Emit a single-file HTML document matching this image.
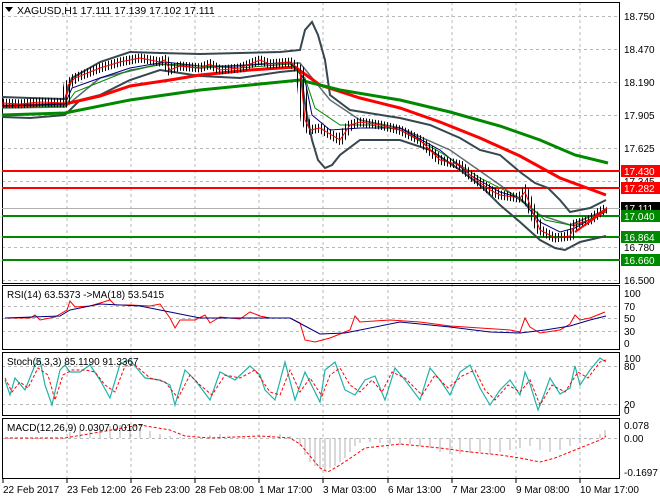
<!DOCTYPE html>
<html><head><meta charset="utf-8"><style>
body{margin:0;background:#fff;}
svg{display:block;font-family:"Liberation Sans",sans-serif;font-size:10px;}
</style></head><body>
<svg width="660" height="500" xmlns="http://www.w3.org/2000/svg">
<defs>
<pattern id="bars" width="3" height="7" patternUnits="userSpaceOnUse">
<rect x="0" y="0" width="1" height="7" fill="#000"/>
</pattern>
</defs>
<rect width="660" height="500" fill="#fff"/>
<g stroke="#b8b8b8" stroke-dasharray="3,3" stroke-width="1">
<path d="M67 2V478M131 2V478M195 2V478M259 2V478M323 2V478M388 2V478M452 2V478M516 2V478M580 2V478"/>
<path d="M2 16.5H620M2 49.5H620M2 82.5H620M2 115.5H620M2 148.5H620M2 181.5H620M2 247.5H620M2 280.5H620"/>
<path d="M2 306.5H620M2 318.5H620M2 331.5H620M2 366.5H620M2 404.5H620M2 438.5H620"/>
</g>
<g fill="none" stroke="#000" stroke-width="1">
<rect x="2.5" y="2.5" width="617" height="281"/>
<rect x="2.5" y="285.5" width="617" height="64"/>
<rect x="2.5" y="352.5" width="617" height="63"/>
<rect x="2.5" y="418.5" width="617" height="60"/>
</g>
<path d="M2 208.5H620" stroke="#b0b0b0"/>
<path d="M2 171H620M2 188H620" stroke="#f00" stroke-width="2"/>
<path d="M2 216H620M2 237H620M2 260H620" stroke="#080" stroke-width="2"/>
<!-- bollinger -->
<g fill="none" stroke="#37474f" stroke-width="2">
<path d="M2 97 L30 98 L65 99 L72 78 L100 62 L130 52 L160 53 L200 54 L240 53 L280 52 L300 50 L305 30 L312 22 L318 35 L325 60 L330 95 L350 110 L400 118 L430 125 L460 138 L480 150 L500 155 L520 172 L535 183 L548 188 L560 200 L570 212 L590 208 L606 200"/>
<path d="M2 117 L30 118 L65 115 L80 100 L100 95 L130 80 L160 70 L200 76 L240 78 L280 72 L300 70 L306 110 L312 140 L318 160 L325 168 L332 165 L340 155 L360 140 L400 140 L430 150 L460 170 L480 185 L500 205 L520 222 L540 240 L555 248 L565 250 L580 242 L606 236"/>
<path d="M2 108 L65 107 L100 78 L160 64 L200 68 L260 64 L300 63 L330 100 L360 120 L400 128 L450 150 L500 185 L540 215 L570 225 L606 210" stroke-width="1.5" opacity=".8"/>
</g>
<g fill="none" stroke-width="3">
<path d="M2 106 L65 104 L100 96 L130 86 L170 80 L200 75 L250 70 L295 67 L320 85 L360 98 L400 108 L440 122 L480 138 L520 156 L560 178 L606 195" stroke="#f00"/>
<path d="M2 115 L65 113 L130 100 L200 90 L260 84 L300 80 L340 90 L400 100 L450 112 L500 126 L540 140 L575 155 L608 163" stroke="#080"/>
</g>
<g fill="none" stroke-width="1">
<path d="M2 106 L65 104 L72 88 L100 78 L130 68 L165 62 L200 66 L240 66 L290 62 L305 80 L312 115 L330 130 L360 128 L400 128 L440 150 L470 175 L500 192 L520 198 L540 222 L560 232 L575 228 L606 210" stroke="#000080"/>
<path d="M2 108 L65 106 L75 92 L100 82 L130 70 L165 64 L200 66 L240 68 L290 64 L305 78 L315 108 L340 125 L370 125 L400 130 L440 152 L480 178 L520 198 L545 220 L575 226 L606 212" stroke="#080"/>
</g>
<path id="pr" d="M2 103 L20 104 L40 102 L65 103 L68 85 L75 78 L90 72 L100 68 L120 62 L140 58 L160 62 L165 60 L170 70 L180 66 L200 68 L210 64 L220 70 L240 68 L260 60 L270 64 L290 62 L300 70 L305 120 L310 130 L320 128 L340 140 L350 125 L360 122 L380 125 L400 130 L420 140 L440 160 L460 165 L470 175 L490 190 L500 195 L520 198 L525 192 L530 205 L540 230 L555 238 L570 236 L575 224 L590 220 L600 212 L607 208" fill="none" stroke="url(#bars)" stroke-width="9"/>
<path d="M2 103 L20 104 L40 102 L65 103 L68 85 L75 78 L90 72 L100 68 L120 62 L140 58 L160 62 L165 60 L170 70 L180 66 L200 68 L210 64 L220 70 L240 68 L260 60 L270 64 L290 62 L300 70 L305 120 L310 130 L320 128 L340 140 L350 125 L360 122 L380 125 L400 130 L420 140 L440 160 L460 165 L470 175 L490 190 L500 195 L520 198 L525 192 L530 205 L540 230 L555 238 L570 236 L575 224 L590 220 L600 212 L607 208" fill="none" stroke="#f00" stroke-width="1"/>
<path d="M575 232 L606 210" stroke="#f00" stroke-width="2"/>
<!-- RSI -->
<path d="M5 318 L30 318 L35 315 L40 320 L55 317 L67 310 L70 301 L75 307 L90 306 L100 303 L110 300 L115 305 L130 305 L150 306 L160 304 L170 318 L175 328 L180 320 L195 320 L205 315 L210 323 L220 317 L240 319 L250 312 L260 316 L270 318 L290 318 L300 323 L305 340 L315 342 L330 338 L350 330 L355 316 L360 322 L390 320 L420 322 L450 326 L480 328 L510 330 L520 332 L525 318 L530 327 L540 333 L560 330 L570 324 L575 315 L580 320 L590 318 L605 312" fill="none" stroke="#f00"/>
<path d="M5 318 L60 316 L70 310 L100 304 L140 306 L170 312 L200 318 L250 318 L290 318 L305 326 L320 334 L345 333 L400 322 L450 327 L490 332 L520 333 L545 330 L570 326 L590 320 L606 316" fill="none" stroke="#000080"/>
<!-- Stoch -->
<path d="M5 380 L10 395 L15 378 L25 390 L35 365 L40 360 L45 385 L52 405 L60 370 L65 365 L70 372 L80 372 L90 365 L100 380 L110 398 L120 364 L130 360 L145 378 L160 380 L170 385 L175 405 L185 370 L195 380 L210 400 L220 372 L235 380 L250 366 L260 375 L265 390 L275 400 L285 362 L295 400 L305 372 L320 402 L325 370 L335 362 L345 390 L355 395 L365 380 L375 376 L385 400 L395 368 L405 380 L420 400 L430 368 L440 380 L450 395 L460 372 L470 365 L480 388 L490 405 L500 390 L510 380 L520 395 L525 372 L530 384 L538 410 L545 392 L550 378 L560 394 L570 388 L575 366 L580 385 L590 370 L600 358 L606 362" fill="none" stroke="#20b2aa" stroke-width="1.2"/>
<path d="M5 378 L12 392 L20 382 L28 388 L38 368 L48 375 L55 400 L63 375 L72 370 L85 370 L95 372 L105 385 L115 392 L125 366 L135 365 L150 378 L165 382 L178 398 L190 375 L200 385 L212 395 L225 375 L240 378 L255 370 L270 392 L280 395 L290 370 L300 392 L310 378 L322 396 L330 375 L340 368 L350 385 L360 392 L372 380 L382 392 L392 372 L405 378 L422 395 L435 375 L448 388 L462 376 L475 370 L485 390 L495 400 L508 385 L520 392 L530 380 L540 405 L552 385 L565 392 L578 372 L588 378 L600 362 L606 360" fill="none" stroke="#f00" stroke-dasharray="3,2"/>
<!-- MACD hist -->
<path d="M70 438V432M80 438V430M90 438V428M100 438V427M110 438V426M120 438V425M130 438V426M140 438V428M150 438V431M160 438V434M170 438V436M180 438V437M200 438V437M210 438V435M220 438V434M230 438V436M240 438V437M260 438V436M270 438V435M280 438V434M290 438V436M300 438V446M305 438V455M310 438V462M315 438V466M320 438V468M325 438V470M330 438V468M335 438V466M340 438V462M345 438V458M350 438V452M355 438V446M360 438V443M370 438V442M380 438V443M390 438V444M400 438V445M410 438V444M420 438V446M430 438V448M440 438V452M450 438V454M460 438V454M470 438V453M480 438V452M490 438V454M500 438V452M510 438V450M520 438V448M530 438V446M540 438V450M550 438V452M560 438V450M570 438V446M580 438V443M590 438V440M600 438V434M605 438V430" stroke="#b0b0b0" stroke-width="1"/>
<path d="M5 438 L65 438 L100 432 L140 425 L170 430 L185 436 L210 438 L260 436 L290 438 L300 444 L310 456 L320 468 L328 472 L340 465 L355 455 L365 448 L400 444 L440 448 L470 452 L500 455 L520 458 L540 462 L555 458 L570 452 L585 446 L600 440 L606 436" fill="none" stroke="#f00" stroke-dasharray="3,2"/>
<!-- labels -->
<path d="M5 7 L13 7 L9 12 Z" fill="#000"/>
<text x="17" y="14" fill="#000" font-size="10.5">XAGUSD,H1  17.111 17.139 17.102 17.111</text>
<text x="7" y="298">RSI(14) 63.5373  -&gt;MA(18) 53.5415</text>
<text x="7" y="365">Stoch(5,3,3) 85.1190 91.3367</text>
<text x="7" y="431">MACD(12,26,9) 0.0307 0.0107</text>
<g fill="#000">
<text x="624" y="20">18.750</text><text x="624" y="53">18.470</text><text x="624" y="86">18.190</text><text x="624" y="119">17.905</text><text x="624" y="152">17.625</text><text x="624" y="185">17.345</text><text x="624" y="251">16.780</text><text x="624" y="284">16.500</text>
<text x="624" y="297">100</text><text x="624" y="310">70</text><text x="624" y="322">50</text><text x="624" y="335">30</text><text x="624" y="347">0</text>
<text x="624" y="362">100</text><text x="624" y="370">80</text><text x="624" y="408">20</text><text x="624" y="414">0</text>
<text x="624" y="429">0.078</text><text x="624" y="442">0.00</text><text x="624" y="476">-0.1697</text>
</g>
<rect x="621" y="165" width="39" height="12" fill="#f00"/><text x="624" y="175" fill="#fff">17.430</text>
<rect x="621" y="182" width="39" height="12" fill="#f00"/><text x="624" y="192" fill="#fff">17.282</text>
<rect x="621" y="202" width="39" height="12" fill="#000"/><text x="624" y="212" fill="#fff">17.111</text>
<rect x="621" y="210" width="39" height="12" fill="#080"/><text x="624" y="220" fill="#fff">17.040</text>
<rect x="621" y="231" width="39" height="12" fill="#080"/><text x="624" y="241" fill="#fff">16.864</text>
<rect x="621" y="254" width="39" height="12" fill="#080"/><text x="624" y="264" fill="#fff">16.660</text>
<path d="M3 479V483M67 479V483M131 479V483M195 479V483M259 479V483M323 479V483M388 479V483M452 479V483M516 479V483M580 479V483" stroke="#000"/>
<g fill="#000">
<text x="3" y="493">22 Feb 2017</text><text x="67" y="493">23 Feb 12:00</text><text x="131" y="493">26 Feb 23:00</text><text x="195" y="493">28 Feb 08:00</text><text x="259" y="493">1 Mar 17:00</text><text x="323" y="493">3 Mar 03:00</text><text x="388" y="493">6 Mar 13:00</text><text x="452" y="493">7 Mar 23:00</text><text x="516" y="493">9 Mar 08:00</text><text x="580" y="493">10 Mar 17:00</text>
</g>
</svg>
</body></html>
